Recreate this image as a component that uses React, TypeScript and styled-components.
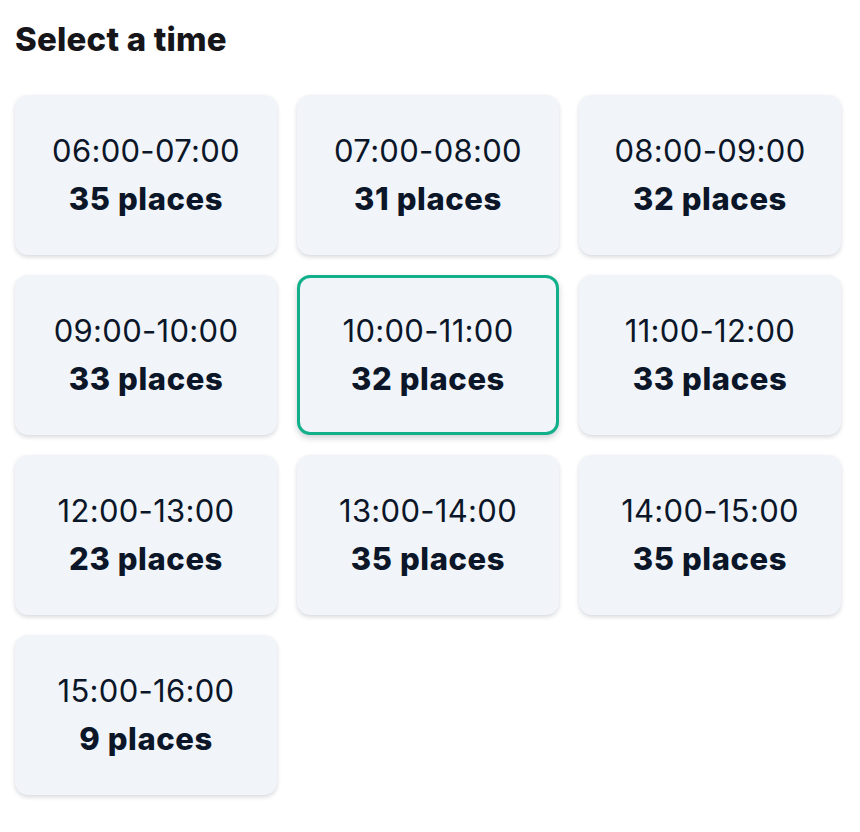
import React, { useState } from "react";
import styled, { createGlobalStyle, css } from "styled-components";

const GlobalStyle = createGlobalStyle`
  body {
    margin: 0;
    background: #ffffff;
    font-family: "Inter", "Noto Sans", sans-serif;
  }
`;

const Page = styled.div`
  padding: 15px 19px 20px 15px;
`;

const Title = styled.h2`
  margin: 0 0 32px;
  font-size: 33px;
  line-height: 48px;
  font-weight: 800;
  color: #16161a;
  letter-spacing: 0.2px;
`;

const SlotGrid = styled.div`
  display: grid;
  grid-template-columns: repeat(3, 1fr);
  gap: 20px;
`;

const Slot = styled.button<{ $selected?: boolean }>`
  box-sizing: border-box;
  height: 160px;
  padding: 0;
  display: flex;
  flex-direction: column;
  align-items: center;
  justify-content: center;
  background: #f1f4f9;
  border: 3px solid transparent;
  border-radius: 13px;
  box-shadow: 0 2px 4px rgba(30, 41, 59, 0.18);
  font-family: inherit;
  color: #0b1628;
  cursor: pointer;

  ${({ $selected }) =>
    $selected &&
    css`
      border-color: #12b08a;
      box-shadow: 0 3px 6px rgba(30, 41, 59, 0.22);
    `}
`;

const Range = styled.span`
  font-size: 31px;
  line-height: 48px;
  font-weight: 400;
  letter-spacing: 0.3px;
`;

const Places = styled.span`
  font-size: 31px;
  line-height: 48px;
  font-weight: 800;
  letter-spacing: 0.6px;
`;

const slots = [
  { range: "06:00-07:00", places: 35 },
  { range: "07:00-08:00", places: 31 },
  { range: "08:00-09:00", places: 32 },
  { range: "09:00-10:00", places: 33 },
  { range: "10:00-11:00", places: 32 },
  { range: "11:00-12:00", places: 33 },
  { range: "12:00-13:00", places: 23 },
  { range: "13:00-14:00", places: 35 },
  { range: "14:00-15:00", places: 35 },
  { range: "15:00-16:00", places: 9 },
];

const App: React.FC = () => {
  const [selected, setSelected] = useState("10:00-11:00");

  return (
    <Page>
      <GlobalStyle />
      <Title>Select a time</Title>
      <SlotGrid>
        {slots.map((s) => (
          <Slot key={s.range} $selected={s.range === selected} onClick={() => setSelected(s.range)}>
            <Range>{s.range}</Range>
            <Places>{s.places} places</Places>
          </Slot>
        ))}
      </SlotGrid>
    </Page>
  );
};

export default App;
